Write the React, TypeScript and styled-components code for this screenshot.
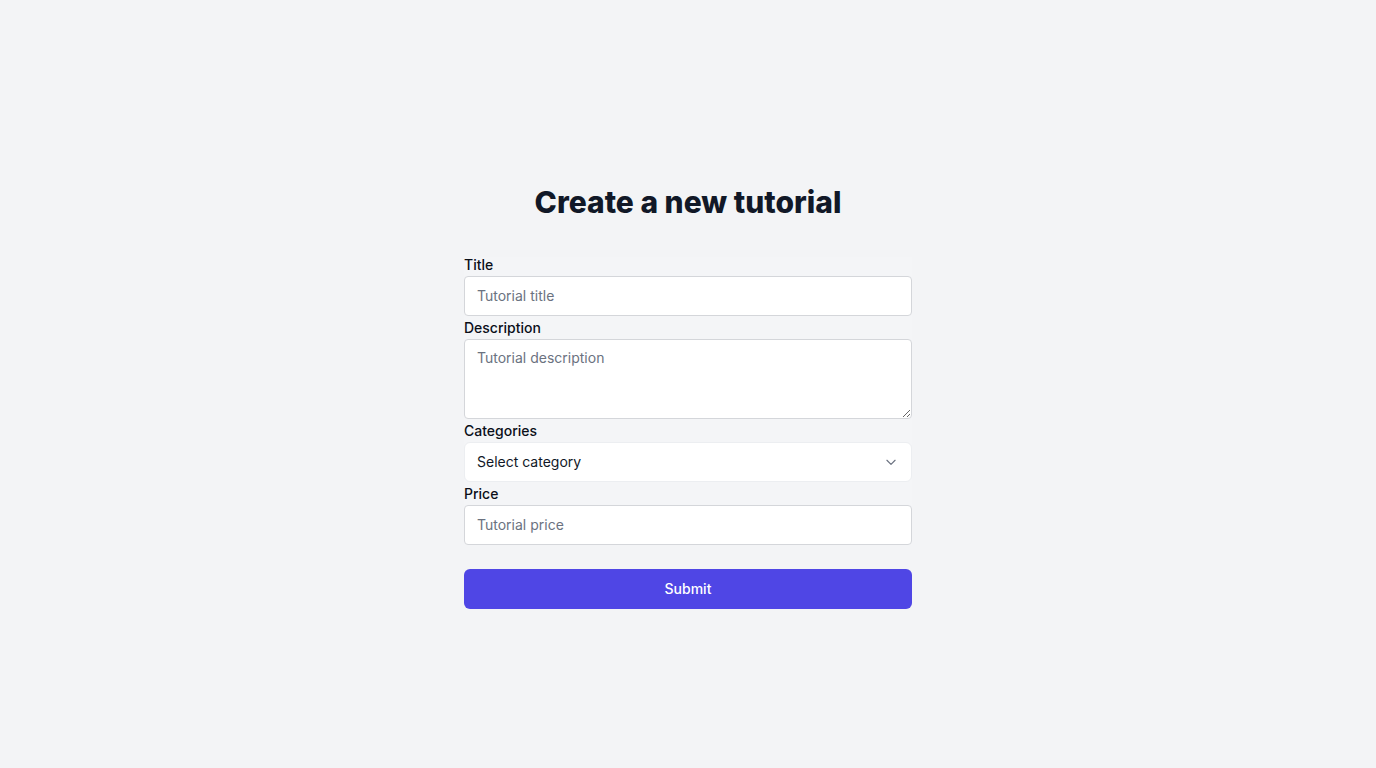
import React from "react";
import styled, { createGlobalStyle } from "styled-components";

const Global = createGlobalStyle`
  html, body { margin: 0; padding: 0; background: #f3f4f6; }
  body { font-family: Inter, "Noto Sans", sans-serif; color: #111827; }
  * { box-sizing: border-box; }
`;

const Page = styled.main`
  min-height: 768px;
  display: flex;
  flex-direction: column;
  align-items: center;
  padding-top: 184px;
`;

const Heading = styled.h1`
  margin: 0;
  font-size: 30px;
  line-height: 36px;
  font-weight: 800;
  color: #111827;
`;

const Form = styled.form`
  width: 448px;
  margin-top: 37px;
  display: flex;
  flex-direction: column;
`;

const Fields = styled.div`
  display: flex;
  flex-direction: column;
  gap: 4px;
  background: #f4f5f7;
`;

const Field = styled.div`
  display: flex;
  flex-direction: column;
`;

const Label = styled.label`
  font-size: 14px;
  line-height: 15px;
  padding-bottom: 4px;
  font-weight: 500;
  color: #0b0f19;
`;

const Input = styled.input`
  height: 40px;
  width: 100%;
  border: 1px solid #d4d6da;
  border-radius: 4px;
  background: #fff;
  padding: 0 12px 1px;
  font-family: Inter, "Noto Sans", sans-serif;
  font-size: 14px;
  color: #111827;
  outline: none;
  &::placeholder { color: #6b7280; }
`;

const TextArea = styled.textarea`
  height: 80px;
  width: 100%;
  border: 1px solid #d4d6da;
  border-radius: 4px;
  background: #fff;
  padding: 8px 12px;
  font-family: Inter, "Noto Sans", sans-serif;
  font-size: 14px;
  line-height: 20px;
  color: #111827;
  outline: none;
  resize: vertical;
  display: block;
  &::placeholder { color: #6b7280; }
`;

const SelectBox = styled.div`
  position: relative;
  height: 40px;
`;

const Select = styled.select`
  appearance: none;
  height: 40px;
  width: 100%;
  border: 1px solid #eceef1;
  border-radius: 6px;
  background: #fff;
  padding: 0 12px 1px;
  font-family: Inter, "Noto Sans", sans-serif;
  font-size: 14px;
  color: #111827;
  outline: none;
`;

const Chevron = styled.svg`
  position: absolute;
  right: 14px;
  top: 13px;
  pointer-events: none;
`;

const Submit = styled.button`
  margin-top: 24px;
  height: 40px;
  width: 100%;
  border: none;
  border-radius: 6px;
  background: #4f46e5;
  color: #fff;
  font-family: Inter, "Noto Sans", sans-serif;
  font-size: 14px;
  font-weight: 500;
  padding: 0 0 2px;
  cursor: pointer;
`;

export default function App() {
  return (
    <>
      <Global />
      <Page>
        <Heading>Create a new tutorial</Heading>
        <Form onSubmit={(e) => e.preventDefault()}>
          <Fields>
            <Field>
              <Label htmlFor="title">Title</Label>
              <Input id="title" placeholder="Tutorial title" />
            </Field>
            <Field>
              <Label htmlFor="desc">Description</Label>
              <TextArea id="desc" placeholder="Tutorial description" />
            </Field>
            <Field>
              <Label htmlFor="cat">Categories</Label>
              <SelectBox>
                <Select id="cat" defaultValue="">
                  <option value="">Select category</option>
                </Select>
                <Chevron width="14" height="14" viewBox="0 0 24 24" fill="none" stroke="#6b7280" strokeWidth="2" strokeLinecap="round" strokeLinejoin="round">
                  <path d="M5 9l7 7 7-7" />
                </Chevron>
              </SelectBox>
            </Field>
            <Field>
              <Label htmlFor="price">Price</Label>
              <Input id="price" placeholder="Tutorial price" />
            </Field>
          </Fields>
          <Submit type="submit">Submit</Submit>
        </Form>
      </Page>
    </>
  );
}
